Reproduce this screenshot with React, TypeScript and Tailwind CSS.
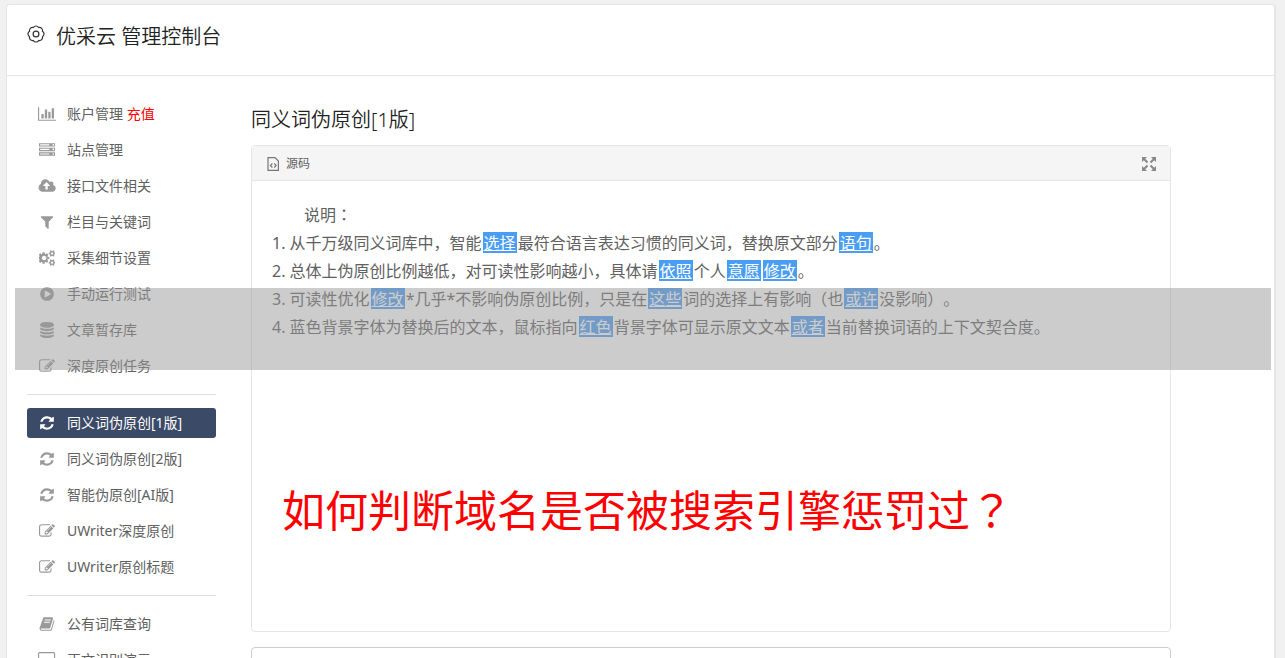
import React from "react";

type IconDef = { w: number; d: string };

const icons: Record<string, IconDef> = {
  chart: { w: 2048, d: "M640 896v512h-256v-512h256zm384-512v1024h-256v-1024h256zm1024 1152v128h-2048v-1536h128v1408h1920zm-640-896v768h-256v-768h256zm384-384v1152h-256v-1152h256z" },
  server: { w: 1792, d: "M128 1408h1024v-128h-1024v128zm0-512h1024v-128h-1024v128zm1568 448q0-40-28-68t-68-28-68 28-28 68 28 68 68 28 68-28 28-68zm-1568-960h1024v-128h-1024v128zm1568 448q0-40-28-68t-68-28-68 28-28 68 28 68 68 28 68-28 28-68zm0-512q0-40-28-68t-68-28-68 28-28 68 28 68 68 28 68-28 28-68zm96 832v384h-1792v-384h1792zm0-512v384h-1792v-384h1792zm0-512v384h-1792v-384h1792z" },
  upload: { w: 1984, d: "M1344 864q0-14-9-23l-352-352q-9-9-23-9t-23 9l-351 351q-10 12-10 24 0 14 9 23t23 9h224v352q0 13 9.5 22.5t22.5 9.5h192q13 0 22.5-9.5t9.5-22.5v-352h224q13 0 22.5-9.5t9.5-22.5zm640 288q0 159-112.5 271.5t-271.5 112.5h-1088q-185 0-316.5-131.5t-131.5-316.5q0-130 70-240t188-165q-2-30-2-43 0-212 150-362t362-150q156 0 285.5 87t188.5 231q71-62 166-62 106 0 181 75t75 181q0 76-41 138 130 31 213.5 135.5t83.5 238.5z" },
  filter: { w: 1792, d: "M1595 295q17 41-14 70l-493 493v742q0 42-39 59-13 5-25 5-27 0-45-19l-256-256q-19-19-19-45v-486l-493-493q-31-29-14-70 17-39 59-39h1280q42 0 59 39z" },
  cogs: { w: 1856, d: "M832 896q0-106-75-181t-181-75-181 75-75 181 75 181 181 75 181-75 75-181zm768 512q0-52-38-90t-90-38-90 38-38 90q0 53 37.5 90.5t90.5 37.5 90.5-37.5 37.5-90.5zm0-1024q0-52-38-90t-90-38-90 38-38 90q0 53 37.5 90.5t90.5 37.5 90.5-37.5 37.5-90.5zm-448 421v185q0 10-7 19.5t-16 10.5l-155 24q-11 35-32 76 34 48 90 115 7 11 7 20 0 12-7 19-23 30-82.5 89.5t-78.5 59.5q-11 0-21-7l-115-90q-37 19-77 31-11 108-23 155-7 24-30 24h-186q-11 0-20-7.5t-10-17.5l-23-153q-34-10-75-31l-118 89q-7 7-20 7-11 0-21-8-144-133-144-160 0-9 7-19 10-14 41-53t47-61q-23-44-35-82l-152-24q-10-1-17-9.5t-7-19.5v-185q0-10 7-19.5t16-10.5l155-24q11-35 32-76-34-48-90-115-7-11-7-20 0-12 7-20 22-30 82-89t79-59q11 0 21 7l115 90q34-18 77-32 11-108 23-154 7-24 30-24h186q11 0 20 7.5t10 17.5l23 153q34 10 75 31l118-89q8-7 20-7 11 0 21 8 144 133 144 160 0 8-7 19-12 16-42 54t-45 60q23 48 34 82l152 23q10 2 17 10.5t7 19.5zm704 533v140q0 16-149 31-12 27-30 52 51 113 51 138 0 4-4 7-122 71-124 71-8 0-46-47t-52-68q-20 2-30 2t-30-2q-14 21-52 68t-46 47q-2 0-124-71-4-3-4-7 0-25 51-138-18-25-30-52-149-15-149-31v-140q0-16 149-31 13-29 30-52-51-113-51-138 0-4 4-7 4-2 35-20t59-34 30-16q8 0 46 46.5t52 67.5q20-2 30-2t30 2q51-71 92-112l6-2q4 0 124 70 4 3 4 7 0 25-51 138 17 23 30 52 149 15 149 31zm0-1024v140q0 16-149 31-12 27-30 52 51 113 51 138 0 4-4 7-122 71-124 71-8 0-46-47t-52-68q-20 2-30 2t-30-2q-14 21-52 68t-46 47q-2 0-124-71-4-3-4-7 0-25 51-138-18-25-30-52-149-15-149-31v-140q0-16 149-31 13-29 30-52-51-113-51-138 0-4 4-7 4-2 35-20t59-34 30-16q8 0 46 46.5t52 67.5q20-2 30-2t30 2q51-71 92-112l6-2q4 0 124 70 4 3 4 7 0 25-51 138 17 23 30 52 149 15 149 31z" },
  play: { w: 1792, d: "M896 128q209 0 385.5 103t279.5 279.5 103 385.5-103 385.5-279.5 279.5-385.5 103-385.5-103-279.5-279.5-103-385.5 103-385.5 279.5-279.5 385.5-103zm384 823q32-18 32-55t-32-55l-544-320q-31-19-64-1-32 19-32 56v640q0 37 32 56 16 8 32 8 17 0 32-9z" },
  database: { w: 1792, d: "M896 768q237 0 443-43t325-127v170q0 69-103 128t-280 93.5-385 34.5-385-34.5-280-93.5-103-128v-170q119 84 325 127t443 43zm0 768q237 0 443-43t325-127v170q0 69-103 128t-280 93.5-385 34.5-385-34.5-280-93.5-103-128v-170q119 84 325 127t443 43zm0-384q237 0 443-43t325-127v170q0 69-103 128t-280 93.5-385 34.5-385-34.5-280-93.5-103-128v-170q119 84 325 127t443 43zm0-1152q208 0 385 34.5t280 93.5 103 128v128q0 69-103 128t-280 93.5-385 34.5-385-34.5-280-93.5-103-128v-128q0-69 103-128t280-93.5 385-34.5z" },
  edit: { w: 1792, d: "M888 1184l116-116-152-152-116 116v56h96v96h56zm440-720q-16-16-33 1l-350 350q-17 17-1 33t33-1l350-350q17-17 1-33zm80 594v190q0 119-84.5 203.5t-203.5 84.5h-832q-119 0-203.5-84.5t-84.5-203.5v-832q0-119 84.5-203.5t203.5-84.5h832q63 0 117 25 15 7 18 23 3 17-9 29l-49 49q-14 14-32 8-23-6-45-6h-832q-66 0-113 47t-47 113v832q0 66 47 113t113 47h832q66 0 113-47t47-113v-126q0-13 9-22l64-64q15-15 35-7t20 29zm-96-738l288 288-672 672h-288v-288zm444 132l-92 92-288-288 92-92q28-28 68-28t68 28l152 152q28 28 28 68t-28 68z" },
  refresh: { w: 1792, d: "M1639 1056q0 5-1 7-64 268-268 434.5t-478 166.5q-146 0-282.5-55t-243.5-157l-129 129q-19 19-45 19t-45-19-19-45v-448q0-26 19-45t45-19h448q26 0 45 19t19 45-19 45l-137 137q71 66 161 102t187 36q134 0 250-65t186-179q11-17 53-117 8-23 30-23h192q13 0 22.5 9.5t9.5 22.5zm25-800v448q0 26-19 45t-45 19h-448q-26 0-45-19t-19-45 19-45l138-138q-148-137-349-137-134 0-250 65t-186 179q-11 17-53 117-8 23-30 23h-199q-13 0-22.5-9.5t-9.5-22.5v-7q65-268 270-434.5t480-166.5q146 0 284 55.5t245 156.5l130-129q19-19 45-19t45 19 19 45z" },
  book: { w: 1792, d: "M1703 478q40 57 18 129l-275 906q-19 64-76.5 107.5t-122.5 43.5h-923q-77 0-148.5-53.5t-99.5-131.5q-24-67-2-127 0-4 3-27t4-37q1-8-3-21.5t-3-19.5q2-11 8-21t16.5-23.5 16.5-23.5q23-38 45-91.5t30-91.5q3-10 .5-30t-.5-28q3-11 17-28t17-23q21-36 42-92t25-90q1-9-2.5-32t.5-28q4-13 22-30.5t22-22.5q19-26 42.5-84.5t27.5-96.5q1-8-3-25.5t-2-26.5q2-8 9-18t18-23 17-21q8-12 16.5-30.5t15-35 16-36 19.5-32 26.5-23.5 36-11.5 47.5 5.5l-1 3q38-9 51-9h761q74 0 114 56t18 130l-274 906q-36 119-71.5 153.5t-128.5 34.5h-869q-27 0-38 15-11 16-1 43 24 70 144 70h923q29 0 56-15.5t35-41.5l300-987q7-22 5-57 38 15 59 43zm-1064 2q-4 13 2 22.5t20 9.5h608q13 0 25.5-9.5t16.5-22.5l21-64q4-13-2-22.5t-20-9.5h-608q-13 0-25.5 9.5t-16.5 22.5zm-83 256q-4 13 2 22.5t20 9.5h608q13 0 25.5-9.5t16.5-22.5l21-64q4-13-2-22.5t-20-9.5h-608q-13 0-25.5 9.5t-16.5 22.5z" },
  desktop: { w: 1920, d: "M1792 992v-832q0-13-9.5-22.5t-22.5-9.5h-1600q-13 0-22.5 9.5t-9.5 22.5v832q0 13 9.5 22.5t22.5 9.5h1600q13 0 22.5-9.5t9.5-22.5zm128-832v1088q0 66-47 113t-113 47h-544q0 37 16 77.5t32 71 16 43.5q0 26-19 45t-45 19h-512q-26 0-45-19t-19-45q0-14 16-44t32-70 16-78h-544q-66 0-113-47t-47-113v-1088q0-66 47-113t113-47h1600q66 0 113 47t47 113z" },
};

function Icon({ name }: { name: string }) {
  const { w, d } = icons[name];
  return (
    <svg viewBox={`0 0 ${w} 1792`} className="h-4 w-auto" fill="currentColor" aria-hidden="true">
      <path d={d} />
    </svg>
  );
}

type Item = { icon: string; label: string; extra?: string; active?: boolean };

const groups: Item[][] = [
  [
    { icon: "chart", label: "账户管理", extra: "充值" },
    { icon: "server", label: "站点管理" },
    { icon: "upload", label: "接口文件相关" },
    { icon: "filter", label: "栏目与关键词" },
    { icon: "cogs", label: "采集细节设置" },
    { icon: "play", label: "手动运行测试" },
    { icon: "database", label: "文章暂存库" },
    { icon: "edit", label: "深度原创任务" },
  ],
  [
    { icon: "refresh", label: "同义词伪原创[1版]", active: true },
    { icon: "refresh", label: "同义词伪原创[2版]" },
    { icon: "refresh", label: "智能伪原创[AI版]" },
    { icon: "edit", label: "UWriter深度原创" },
    { icon: "edit", label: "UWriter原创标题" },
  ],
  [
    { icon: "book", label: "公有词库查询" },
    { icon: "desktop", label: "正文识别演示" },
  ],
];

function NavItem({ item }: { item: Item }) {
  return (
    <li>
      <a
        href="#"
        className={
          item.active
            ? "flex h-[30px] items-center rounded-[3px] bg-[#3b4a66] text-white"
            : "flex h-[30px] items-center rounded-[3px] text-[#606060]"
        }
      >
        <span className={item.active ? "flex w-10 justify-center text-white" : "flex w-10 justify-center text-[#999]"}>
          <Icon name={item.icon} />
        </span>
        <span>
          {item.label}
          {item.extra && <span className="text-[#f00]"> {item.extra}</span>}
        </span>
      </a>
    </li>
  );
}

function Mark({ children }: { children: React.ReactNode }) {
  return (
    <span className="mx-px inline-block bg-[#4a9df5] px-px pt-0.5 leading-[19px] text-white underline">{children}</span>
  );
}

/* Colon and question mark set in the middle of their cell. */
function Centered({ children }: { children: React.ReactNode }) {
  return (
    <span lang="zh-TW" className="font-['Noto_Sans_CJK_TC',sans-serif]">
      {children}
    </span>
  );
}

export default function App() {
  return (
    <div className="relative h-screen overflow-hidden bg-[#f1f1f1] pt-1 pr-[9px] pl-1.5 font-['Noto_Sans','Noto_Sans_CJK_SC',sans-serif] text-sm text-[#606060] [text-spacing-trim:space-all]">
      <div className="min-h-full rounded border border-r-2 border-[#e5e5e5] bg-white">
        <header className="flex h-[71px] items-start gap-[11px] border-b border-[#e5e5e5] px-5 pt-[17px]">
          <svg viewBox="0 0 18 18" className="mt-[3px] size-[18px] text-[#333]" fill="none" stroke="currentColor" strokeWidth="1.2" aria-hidden="true">
            <circle cx="9" cy="9" r="2.9" />
            <path
              strokeLinejoin="round"
              d="M15.47 11.68A3.1 3.1 0 0 1 11.68 15.47A3.1 3.1 0 0 1 6.32 15.47A3.1 3.1 0 0 1 2.53 11.68A3.1 3.1 0 0 1 2.53 6.32A3.1 3.1 0 0 1 6.32 2.53A3.1 3.1 0 0 1 11.68 2.53A3.1 3.1 0 0 1 15.47 6.32A3.1 3.1 0 0 1 15.47 11.68z"
            />
          </svg>
          <h1 className="text-xl leading-[30px] font-[350] text-[#222]">优采云 管理控制台</h1>
        </header>

        <div className="flex gap-[35px] px-5 pt-[23px]">
          <nav className="w-[189px] shrink-0">
            {groups.map((group, i) => (
              <ul
                key={i}
                className={i === 0 ? "flex flex-col gap-1.5" : "mt-[13px] flex flex-col gap-1.5 border-t border-[#ddd] pt-[13px]"}
              >
                {group.map((item) => (
                  <NavItem key={item.label} item={item} />
                ))}
              </ul>
            ))}
          </nav>

          <main className="mr-[83px] min-w-0 grow pt-[5px]">
            <h2 className="text-xl leading-8 font-[350] text-[#222]">同义词伪原创[1版]</h2>
            <section className="mt-[9px] h-[487px] rounded border border-[#e5e5e5]">
              <div className="flex h-[35px] items-center justify-between border-b border-[#e5e5e5] bg-[#f5f5f5] pt-0.5 pr-3.5 pl-[15px] text-xs">
                <button type="button" className="flex items-center gap-[7px]">
                  <svg viewBox="0 0 12 14" className="h-3.5 w-3" fill="none" stroke="#777" strokeWidth="1.2" aria-hidden="true">
                    <path d="M1 .6H8L11.4 4V13.4H1z" />
                    <path d="M5.4 6.5L3.4 8.5L5.4 10.5M7.2 6.5L9.2 8.5L7.2 10.5" />
                  </svg>
                  源码
                </button>
                <button type="button" aria-label="全屏">
                  <svg viewBox="0 0 14 14" className="size-3.5" fill="#888" stroke="#888" aria-hidden="true">
                    <path stroke="none" d="M0 0H5L0 5zM14 0V5L9 0zM0 14V9L5 14zM14 14H9L14 9z" />
                    <path strokeWidth="2" d="M1.5 1.5L5.5 5.5M12.5 1.5L8.5 5.5M1.5 12.5L5.5 8.5M12.5 12.5L8.5 8.5" />
                  </svg>
                </button>
              </div>
              <div className="px-5 pt-[19px] text-base leading-7">
                <p className="pl-8">说明<Centered>：</Centered></p>
                <ol>
                  <li>1. 从千万级同义词库中，智能<Mark>选择</Mark>最符合语言表达习惯的同义词，替换原文部分<Mark>语句</Mark>。</li>
                  <li>2. 总体上伪原创比例越低，对可读性影响越小，具体请<Mark>依照</Mark>个人<Mark>意愿</Mark><Mark>修改</Mark>。</li>
                  <li>3. 可读性优化<Mark>修改</Mark>*几乎*不影响伪原创比例，只是在<Mark>这些</Mark>词的选择上有影响（也<Mark>或许</Mark>没影响）。</li>
                  <li>4. 蓝色背景字体为替换后的文本，鼠标指向<Mark>红色</Mark>背景字体可显示原文文本<Mark>或者</Mark>当前替换词语的上下文契合度。</li>
                </ol>
              </div>
            </section>
            <div className="mt-[15px] h-20 rounded border border-[#ccc]" />
          </main>
        </div>
      </div>

      <div className="absolute top-72 right-3.5 left-[15px] h-[82px] bg-[#999]/50" />
      <p className="absolute top-[477px] left-[282px] text-[43px] leading-[62px] text-[#f00]">
        如何判断域名是否被搜索引擎惩罚过<Centered>？</Centered>
      </p>
    </div>
  );
}
